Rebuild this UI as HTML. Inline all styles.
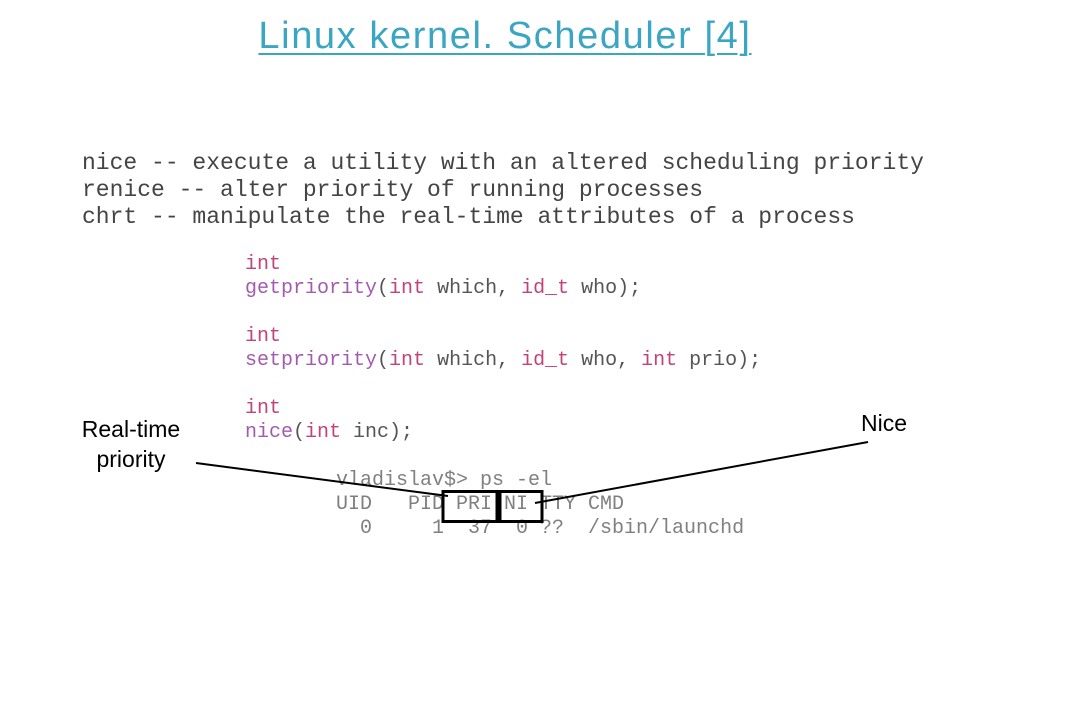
<!DOCTYPE html>
<html><head><style>
body{margin:0;width:1066px;height:716px;background:#fff;position:relative;overflow:hidden;font-family:"Liberation Sans",sans-serif}
.t{position:absolute;left:0;width:1010px;top:15px;text-align:center;font-size:38px;color:#3aa6c4;text-decoration:underline;text-decoration-thickness:2px;text-underline-offset:5px;letter-spacing:1.6px}
pre{margin:0;position:absolute;font-family:"Liberation Mono",monospace;white-space:pre}
.a{left:82px;top:150px;font-size:23px;line-height:27px;color:#444}
.c{left:245px;top:253px;font-size:20px;line-height:24px;color:#555}
.p{color:#c2427a}.f{color:#a35bb0}
.ps{left:336px;top:469px;font-size:20px;line-height:24px;color:#808080}
.l{position:absolute;font-size:23px;color:#000;text-align:center;line-height:30px}
</style></head><body>
<div class="t">Linux kernel. Scheduler [4]</div>
<pre class="a">nice -- execute a utility with an altered scheduling priority
renice -- alter priority of running processes
chrt -- manipulate the real-time attributes of a process</pre>
<pre class="c"><span class="p">int</span>
<span class="f">getpriority</span>(<span class="p">int</span> which, <span class="p">id_t</span> who);

<span class="p">int</span>
<span class="f">setpriority</span>(<span class="p">int</span> which, <span class="p">id_t</span> who, <span class="p">int</span> prio);

<span class="p">int</span>
<span class="f">nice</span>(<span class="p">int</span> inc);</pre>
<pre class="ps">vladislav$> ps -el
UID   PID PRI NI TTY CMD
  0     1  37  0 ??  /sbin/launchd</pre>
<div class="l" style="left:61px;top:414px;width:140px">Real-time<br>priority</div>
<div class="l" style="left:849px;top:408px;width:70px">Nice</div>
<svg width="1066" height="716" style="position:absolute;left:0;top:0">
<g stroke="#000" fill="none">
<line x1="196" y1="463" x2="448" y2="496" stroke-width="2"/>
<line x1="868" y1="442" x2="535" y2="503" stroke-width="2"/>
<rect x="443" y="491.5" width="54" height="30" stroke-width="3"/>
<rect x="500" y="491.5" width="42" height="30" stroke-width="3"/>
</g></svg>
</body></html>
